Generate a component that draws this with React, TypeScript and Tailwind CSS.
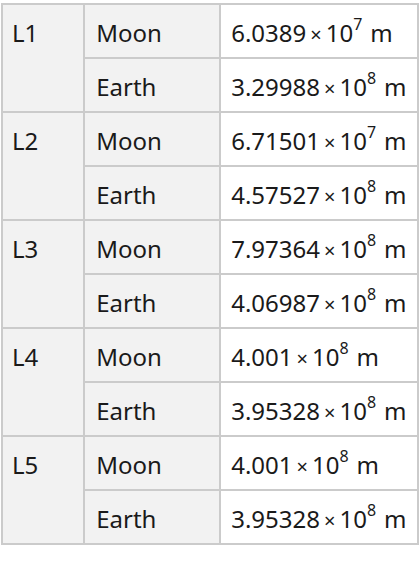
import React from 'react';

type Pt = { point: string; rows: { body: string; mant: string; exp: string }[] };

const data: Pt[] = [
  { point: 'L1', rows: [{ body: 'Moon', mant: '6.0389', exp: '7' }, { body: 'Earth', mant: '3.29988', exp: '8' }] },
  { point: 'L2', rows: [{ body: 'Moon', mant: '6.71501', exp: '7' }, { body: 'Earth', mant: '4.57527', exp: '8' }] },
  { point: 'L3', rows: [{ body: 'Moon', mant: '7.97364', exp: '8' }, { body: 'Earth', mant: '4.06987', exp: '8' }] },
  { point: 'L4', rows: [{ body: 'Moon', mant: '4.001', exp: '8' }, { body: 'Earth', mant: '3.95328', exp: '8' }] },
  { point: 'L5', rows: [{ body: 'Moon', mant: '4.001', exp: '8' }, { body: 'Earth', mant: '3.95328', exp: '8' }] },
];

function Quantity({ mant, exp }: { mant: string; exp: string }) {
  return (
    <span className="whitespace-nowrap">
      {mant}
      <span className="ml-[4px] mr-[4px] text-[20px]">×</span>
      10<sup className="-top-[12px] text-[16px]">{exp}</sup>
      <span className="ml-[8px]">m</span>
    </span>
  );
}

export default function App() {
  return (
    <div className="w-[420px] h-[578px] bg-white pt-[3px] pl-[1px] font-['Noto_Sans',sans-serif] text-[24px] text-[#1a1a1a]">
      <table className="border-collapse w-[418px]">
        <colgroup>
          <col className="w-[83px]" />
          <col className="w-[137px]" />
          <col className="w-[198px]" />
        </colgroup>
        <tbody>
          {data.map((pt) =>
            pt.rows.map((r, i) => (
              <tr key={pt.point + r.body} className="h-[54px]">
                {i === 0 && (
                  <td rowSpan={2} className="align-top border-2 border-[#cbcbcb] bg-[#f2f2f2] pl-[9px] pt-[15px] leading-[26px]">
                    {pt.point}
                  </td>
                )}
                <td className="align-top border-2 border-[#cbcbcb] bg-[#f2f2f2] pl-[11px] pt-[15px] leading-[26px]">{r.body}</td>
                <td className="align-top border-2 border-[#cbcbcb] bg-white pl-[10px] pt-[15px] leading-[26px]">
                  <Quantity mant={r.mant} exp={r.exp} />
                </td>
              </tr>
            ))
          )}
        </tbody>
      </table>
    </div>
  );
}
